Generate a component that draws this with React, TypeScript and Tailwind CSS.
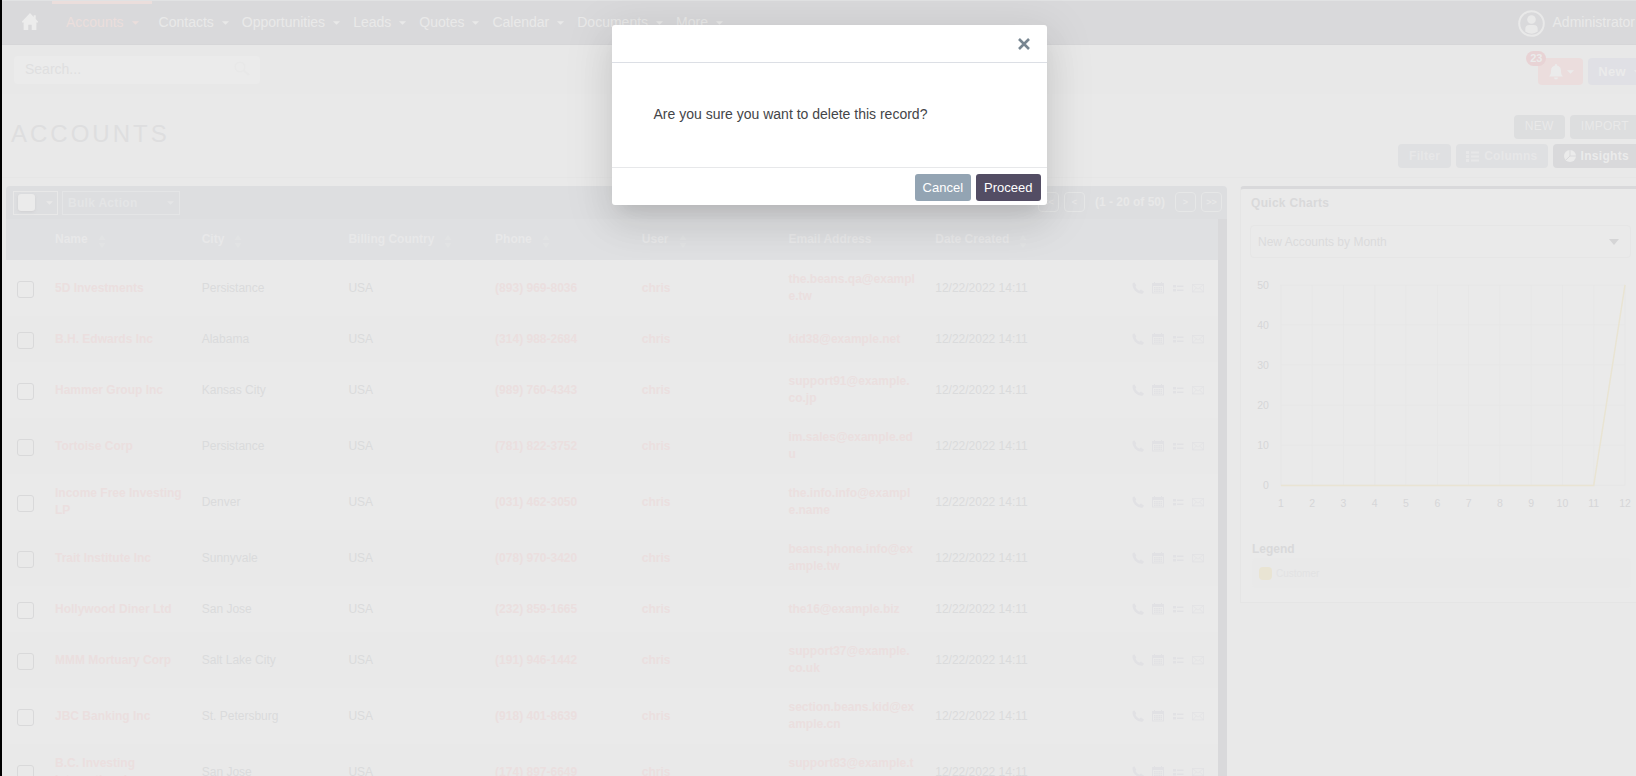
import type { ReactNode } from "react";

const navItems = ["Contacts", "Opportunities", "Leads", "Quotes", "Calendar", "Documents", "More"];

const columns = [
  { label: "Name", sortable: true },
  { label: "City", sortable: true },
  { label: "Billing Country", sortable: true },
  { label: "Phone", sortable: true },
  { label: "User", sortable: true },
  { label: "Email Address", sortable: false },
  { label: "Date Created", sortable: true },
];

type Account = { name: string; city: string; phone: string; email: string };

const accounts: Account[] = [
  { name: "5D Investments", city: "Persistance", phone: "(893) 969-8036", email: "the.beans.qa@example.tw" },
  { name: "B.H. Edwards Inc", city: "Alabama", phone: "(314) 988-2684", email: "kid38@example.net" },
  { name: "Hammer Group Inc", city: "Kansas City", phone: "(989) 760-4343", email: "support91@example.co.jp" },
  { name: "Tortoise Corp", city: "Persistance", phone: "(781) 822-3752", email: "im.sales@example.edu" },
  { name: "Income Free Investing LP", city: "Denver", phone: "(031) 462-3050", email: "the.info.info@example.name" },
  { name: "Trait Institute Inc", city: "Sunnyvale", phone: "(078) 970-3420", email: "beans.phone.info@example.tw" },
  { name: "Hollywood Diner Ltd", city: "San Jose", phone: "(232) 859-1665", email: "the16@example.biz" },
  { name: "MMM Mortuary Corp", city: "Salt Lake City", phone: "(191) 946-1442", email: "support37@example.co.uk" },
  { name: "JBC Banking Inc", city: "St. Petersburg", phone: "(918) 401-8639", email: "section.beans.kid@example.cn" },
  { name: "B.C. Investing International", city: "San Jose", phone: "(174) 897-6649", email: "support83@example.tw" },
];

function Caret({ className = "" }: { className?: string }) {
  return (
    <svg viewBox="0 0 8 4" className={`h-1 w-[7px] shrink-0 ${className}`} fill="currentColor" aria-hidden="true">
      <path d="M0 0h8L4 4z" />
    </svg>
  );
}

function SortIcon() {
  return (
    <svg viewBox="0 0 8 13" className="mt-1 h-[13px] w-2 text-[#e2e3e4]" fill="currentColor" aria-hidden="true">
      <path d="M4 0l3.500 5h-7zM4 13l3.500-5h-7z" />
    </svg>
  );
}

function NavItem({ label }: { label: string }) {
  return (
    <a href="#" className="flex items-center gap-2 pr-[6px] pl-[7px]">
      {label}
      <Caret className="mt-[3px]" />
    </a>
  );
}

function NavBar() {
  return (
    <header className="flex h-[45px] items-stretch justify-between border-t border-b border-t-[#e1e2e3] border-b-[#d6d6d8] bg-[#d9d9db] pr-[21px] text-sm text-[#e9e9e9]">
      <nav className="flex items-stretch pb-[2px]">
        <a href="#" aria-label="Home" className="flex items-center pl-5">
          <svg viewBox="0 0 16 17" className="h-[17px] w-4 text-[#ececec]" fill="currentColor" aria-hidden="true">
            <path d="M8 0L0 8.400V9.400h1.600V17h4.700v-5.200h3.400V17h4.700V9.400H16v-1L13.700 6V2.200h-2v1.700z" />
          </svg>
        </a>
        <a href="#" className="ml-[14px] flex items-center gap-2 border-t-[3px] border-[#ebdedc] pr-[13px] pb-[3px] pl-[14px] text-[#ebdedc]">
          Accounts
          <Caret className="mt-[3px]" />
        </a>
        {navItems.map((item) => (
          <NavItem key={item} label={item} />
        ))}
      </nav>
      <button type="button" className="flex items-center gap-2">
        <svg viewBox="0 0 27 27" className="mt-[2px] size-[27px]" aria-hidden="true">
          <circle cx="13.500" cy="13.500" r="12.300" fill="none" stroke="currentColor" strokeWidth="2" />
          <circle cx="13.500" cy="9.500" r="4.300" fill="currentColor" />
          <path d="M7.300 21.500v-2.500a4 4 0 0 1 4-4h4.400a4 4 0 0 1 4 4v2.500a10 10 0 0 1-12.400 0z" fill="currentColor" />
        </svg>
        <span className="pb-[2px]">Administrator</span>
      </button>
    </header>
  );
}

function SearchBar() {
  return (
    <div className="flex h-[49px] items-center justify-between bg-[#e8e8e8] pr-[5px] pl-3">
      <label className="flex h-7 w-[246px] items-center rounded-sm bg-[#ebebeb] pr-[10px] pb-[2px] pl-[11px]">
        <input
          type="text"
          aria-label="Search"
          placeholder="Search..."
          className="min-w-0 flex-1 bg-transparent text-sm outline-none placeholder:text-[#dfdfe0]"
        />
        <svg viewBox="0 0 16 16" className="size-4 text-[#e8e8e8]" fill="none" stroke="currentColor" aria-hidden="true">
          <circle cx="6" cy="6" r="4.800" strokeWidth="1.500" />
          <path d="M9.800 9.500L15 14" strokeWidth="2.200" />
        </svg>
      </label>
      <div className="flex gap-[5px] pt-1">
        <button type="button" aria-label="Notifications" className="relative flex h-[27px] w-[45px] items-center gap-1 rounded-sm bg-[#ebdddd] pl-[11px] text-[#ebebeb]">
          <svg viewBox="0 0 14 16" className="h-4 w-[14px]" fill="currentColor" aria-hidden="true">
            <path d="M7 0a1 1 0 0 1 1 1v.500c2.500.500 4 2.500 4 5 0 3.500.700 4.700 2 6H0c1.300-1.300 2-2.500 2-6 0-2.500 1.500-4.500 4-5V1a1 1 0 0 1 1-1zM5 13.500h4a2 2 0 0 1-4 0z" />
          </svg>
          <Caret />
          <span className="absolute -top-[7px] -left-3 flex h-[15px] w-5 items-center justify-center rounded-full bg-[#e8d3d5] text-[11px] font-bold">
            23
          </span>
        </button>
        <button type="button" className="flex h-[27px] items-center gap-2 rounded-sm bg-[#e0e0e5] px-[10px] text-[13px] font-bold tracking-wide text-[#ebebeb]">
          New
          <Caret />
        </button>
      </div>
    </div>
  );
}

function PageHeading() {
  return (
    <div className="flex h-[84px] items-start justify-between border-b border-[#e6e6e6] pr-4 pl-[9px]">
      <h1 className="mt-6 text-2xl leading-8 tracking-[3px] text-[#dededf]">ACCOUNTS</h1>
      <div className="flex flex-col items-end gap-[5px] pt-[21px] text-xs text-[#e9e9e9]">
        <div className="flex gap-[5px]">
          <button type="button" className="flex h-6 items-center rounded-sm bg-[#dddedf] px-[11px] pb-[3px] tracking-wide">NEW</button>
          <button type="button" className="flex h-6 items-center rounded-sm bg-[#dddedf] px-[11px] pb-[3px] tracking-wide">IMPORT</button>
        </div>
        <div className="flex gap-[5px] font-bold tracking-wide">
          <button type="button" className="flex h-6 items-center rounded-sm bg-[#dfe0e2] px-[11px] text-[#e7e7e8]">Filter</button>
          <button type="button" className="flex h-6 items-center gap-[5px] rounded-sm bg-[#dfe0e2] px-[10px] text-[#e7e7e8]">
            <svg viewBox="0 0 13 11" className="h-[11px] w-[13px]" fill="currentColor" aria-hidden="true">
              <path d="M0 0h3v3H0zM5 .500h8v2H5zM0 4h3v3H0zM5 4.500h8v2H5zM0 8h3v3H0zM5 8.500h8v2H5z" />
            </svg>
            Columns
          </button>
          <button type="button" className="flex h-6 items-center gap-[5px] rounded-sm bg-[#d9d9db] px-[11px] text-[#ebebeb]">
            <svg viewBox="0 0 12 12" className="size-3" aria-hidden="true">
              <circle cx="6" cy="6" r="6" fill="currentColor" />
              <path d="M6 0v6h6M6 6l-4.300 4.200" fill="none" stroke="#d9d9db" strokeWidth="1" />
            </svg>
            Insights
          </button>
        </div>
      </div>
    </div>
  );
}

function PageButton({ label, children }: { label: string; children: ReactNode }) {
  return (
    <button
      type="button"
      aria-label={label}
      className="flex h-5 w-[21px] items-center justify-center rounded-sm border border-[#e6e7e7] text-[9px]"
    >
      {children}
    </button>
  );
}

function TableToolbar() {
  return (
    <div className="flex h-[33px] items-center justify-between rounded-t bg-[#dddee0] pr-[5px] pl-[7px] text-xs font-bold text-[#e8e8e8]">
      <div className="flex gap-1">
        <div className="flex h-6 w-[45px] items-center gap-[11px] border border-[#e8e8e8] pl-1">
          <input type="checkbox" aria-label="Select all" className="size-[17px] appearance-none rounded-[3px] bg-[#ebebeb] shadow-sm shadow-[#d2d2d4]" />
          <Caret className="w-[5px]" />
        </div>
        <button type="button" className="flex h-6 w-[118px] items-center justify-between border border-[#e4e5e6] px-[5px] tracking-wide text-[#e4e5e6]">
          Bulk Action
          <Caret className="w-[5px]" />
        </button>
      </div>
      <div className="flex items-center gap-[5px] pb-[2px]">
        <PageButton label="First page">&lt;&lt;</PageButton>
        <PageButton label="Previous page">&lt;</PageButton>
        <span className="px-[5px]">(1 - 20 of 50)</span>
        <PageButton label="Next page">&gt;</PageButton>
        <PageButton label="Last page">&gt;&gt;</PageButton>
      </div>
    </div>
  );
}

function RowActions() {
  return (
    <div className="flex items-center justify-end gap-2 pr-[14px] text-[#e1e1e4]">
      <a href="#" aria-label="Log call">
        <svg viewBox="0 0 12 12" className="size-3" fill="currentColor" aria-hidden="true">
          <path d="M2.300.200L.5 1.400C0 6.800 5 12 10.600 11.700L12 9.700 9 7.600 7.400 8.800C5.700 8 4.200 6.500 3.500 4.700L4.300 3.400z" />
        </svg>
      </a>
      <a href="#" aria-label="Schedule meeting">
        <svg viewBox="0 0 12 12" className="size-3" fill="currentColor" aria-hidden="true">
          <path fillRule="evenodd" d="M0 1h2V0h1v1h6V0h1v1h2v10.500H0zM1 4v6.600h10V4z" />
          <path d="M2 5h1.600v1.300H2zM4.200 5h1.600v1.300H4.200zM6.400 5H8v1.300H6.400zM8.500 5H10v1.300H8.500zM2 6.800h1.600v1.300H2zM4.200 6.800h1.600v1.300H4.200zM6.400 6.800H8v1.300H6.400zM8.500 6.800H10v1.300H8.500zM2 8.600h1.600v1.300H2zM4.200 8.600h1.600v1.300H4.200zM6.400 8.600H8v1.300H6.400zM8.500 8.600H10v1.300H8.500z" />
        </svg>
      </a>
      <a href="#" aria-label="Create task">
        <svg viewBox="0 0 12 12" className="size-3" fill="currentColor" aria-hidden="true">
          <path d="M1 3h3v2.500H1zM5 3.500h6.500V5H5zM1 7h3v2.500H1zM5 7.500h6.500V9H5z" />
        </svg>
      </a>
      <a href="#" aria-label="Compose email">
        <svg viewBox="0 0 12 12" className="size-3" fill="none" stroke="currentColor" aria-hidden="true">
          <path d="M.5 2.500h11v7.500H.5zM.5 2.500L6 7.200l5.500-4.700M.5 10l3.700-4M11.500 10L7.800 6" strokeWidth=".7" />
        </svg>
      </a>
    </div>
  );
}

function AccountsTable() {
  return (
    <div className="border-r-[9px] border-[#d9d9db]">
      <table className="w-full table-fixed border-collapse text-left text-xs leading-[17px]">
        <colgroup>
          <col className="w-[42px]" />
          {columns.map((c) => (
            <col key={c.label} />
          ))}
          <col className="w-[143px]" />
        </colgroup>
        <thead>
          <tr className="h-[41px] bg-[#dfe0e2] text-[#e8e8e9]">
            <th aria-label="Select" />
            {columns.map((c) => (
              <th key={c.label} className="p-0 pl-[7px] font-bold">
                <span className="flex items-center gap-[10px]">
                  {c.label}
                  {c.sortable && <SortIcon />}
                </span>
              </th>
            ))}
            <th aria-label="Actions" />
          </tr>
        </thead>
        <tbody>
          {accounts.map((a, i) => {
            const twoLines = a.email.length > 17;
            return (
              <tr
                key={a.name}
                className={`${i % 2 ? "bg-[#e9e9e9]" : "bg-[#eaeaea]"} ${twoLines ? "h-14" : "h-[46px]"} text-[#dadbdc]`}
              >
                <td className="p-0 pt-[2px] pl-[11px]">
                  <input
                    type="checkbox"
                    aria-label={`Select ${a.name}`}
                    className="block size-[17px] appearance-none rounded-[3px] border border-[#d9d9da]"
                  />
                </td>
                <td className="py-0 pr-3 pl-[7px] font-bold text-[#ebdfdf]">
                  <a href="#">{a.name}</a>
                </td>
                <td className="py-0 pr-3 pl-[7px]">{a.city}</td>
                <td className="py-0 pr-3 pl-[7px]">USA</td>
                <td className="py-0 pr-3 pl-[7px] font-bold text-[#ebdfdf]">
                  <a href="#">{a.phone}</a>
                </td>
                <td className="py-0 pr-3 pl-[7px] font-bold text-[#ebdfdf]">
                  <a href="#">chris</a>
                </td>
                <td className="py-0 pr-3 pl-[7px] font-bold break-all text-[#ebdfdf]">
                  <a href="#">{a.email}</a>
                </td>
                <td className="py-0 pr-3 pl-[7px]">12/22/2022 14:11</td>
                <td className="p-0">
                  <RowActions />
                </td>
              </tr>
            );
          })}
        </tbody>
      </table>
    </div>
  );
}

const months = [1, 2, 3, 4, 5, 6, 7, 8, 9, 10, 11, 12];
const ticks = [50, 40, 30, 20, 10, 0];

function LineChart() {
  const x = (m: number) => 31 + ((m - 1) * 345) / 11;
  const y = (v: number) => 212 - (v * 201) / 50;
  return (
    <svg viewBox="0 0 382 240" className="mt-4 w-full" role="img" aria-label="New accounts by month">
      <g stroke="#e7e7e7" strokeWidth="1">
        {months.map((m) => (
          <line key={m} x1={x(m)} x2={x(m)} y1={y(50)} y2={y(0)} />
        ))}
        {ticks.map((t) => (
          <line key={t} x1={x(1)} x2={x(12)} y1={y(t)} y2={y(t)} />
        ))}
      </g>
      <polyline points={months.map((m) => `${x(m)},${y(m === 12 ? 50 : 0)}`).join(" ")} fill="none" stroke="#e9e4d3" strokeWidth="1.500" />
      <g fill="#d6d6d8" fontSize="10.500">
        {ticks.map((t) => (
          <text key={t} x="19" y={y(t) + 4} textAnchor="end">{t}</text>
        ))}
        {months.map((m) => (
          <text key={m} x={x(m)} y="234" textAnchor="middle">{m}</text>
        ))}
      </g>
    </svg>
  );
}

function QuickCharts() {
  return (
    <aside className="w-[401px] shrink-0 rounded-t border border-t-[3px] border-[#e5e5e5] border-t-[#d9d9db] bg-[#eaeaea] px-[9px] pb-[14px] text-xs text-[#d9d9da]">
      <h2 className="mt-[5px] pl-px leading-[18px] font-bold tracking-wide">Quick Charts</h2>
      <div className="relative mt-[13px]">
        <select aria-label="Chart" className="block h-[33px] w-full appearance-none rounded-sm border border-[#e6e6e6] bg-transparent px-[7px] text-[#dbdbdc]">
          <option>New Accounts by Month</option>
        </select>
        <svg viewBox="0 0 10 6" className="pointer-events-none absolute top-[14px] right-3 h-[6px] w-[10px] text-[#d5d5d6]" fill="currentColor" aria-hidden="true">
          <path d="M0 0h10L5 6z" />
        </svg>
      </div>
      <LineChart />
      <h3 className="mt-[27px] pl-[2px] leading-[18px] font-bold">Legend</h3>
      <div className="ml-[2px] flex h-[30px] items-center gap-1 rounded-sm bg-[#e9e9e9] pl-[7px] text-[10px] text-[#e2e2e3]">
        <span className="size-[13px] rounded-sm bg-[#e9e4d3]" />
        Customer
      </div>
    </aside>
  );
}

function ConfirmDialog() {
  return (
    <div className="absolute inset-0 flex items-start justify-center pt-[25px]">
      <div
        role="dialog"
        aria-modal="true"
        aria-labelledby="confirm-text"
        className="w-[435px] rounded-[3px] bg-white shadow-[0_11px_15px_-7px_rgba(0,0,0,0.08),0_20px_38px_0_rgba(0,0,0,0.06),0_9px_46px_8px_rgba(0,0,0,0.08)]"
      >
        <div className="flex h-[38px] items-center justify-end border-b border-[#dcdfe5] pr-[17px]">
          <button type="button" aria-label="Close" className="text-[#788691]">
            <svg viewBox="0 0 12 12" className="size-3" fill="none" stroke="currentColor" strokeWidth="2.600" aria-hidden="true">
              <path d="M1 1l10 10M11 1L1 11" />
            </svg>
          </button>
        </div>
        <p id="confirm-text" className="px-[42px] pt-[41px] pb-[43px] text-sm leading-5 text-[#444548]">
          Are you sure you want to delete this record?
        </p>
        <div className="flex h-[38px] items-center justify-end gap-[5px] border-t border-[#e7e8ea] pt-[2px] pr-[6px] text-[13px] text-white">
          <button type="button" className="h-[27px] rounded-[3px] bg-[#93a4b3] px-2">Cancel</button>
          <button type="button" className="h-[27px] rounded-[3px] bg-[#534d64] px-2">Proceed</button>
        </div>
      </div>
    </div>
  );
}

export default function App() {
  return (
    <div className="h-screen overflow-hidden border-l-2 border-black bg-[#e9e9e9] font-['Liberation_Sans',Arial,sans-serif]">
      <div className="relative -mr-5">
        <NavBar />
        <SearchBar />
        <PageHeading />
        <main className="flex items-start gap-[13px] pt-2 pr-[15px] pl-1">
          <section className="min-w-0 flex-1" aria-label="Accounts">
            <TableToolbar />
            <AccountsTable />
          </section>
          <QuickCharts />
        </main>
        <ConfirmDialog />
      </div>
    </div>
  );
}
